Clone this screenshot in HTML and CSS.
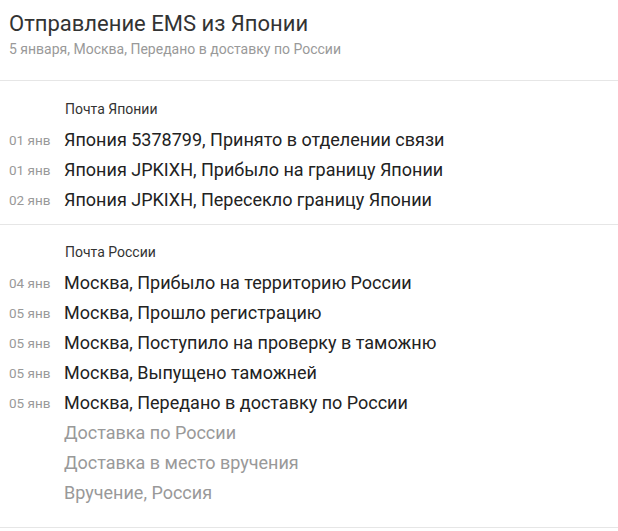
FILE: index.html
```html
<!DOCTYPE html>
<html lang="ru">
<head>
<meta charset="utf-8">
<link rel="stylesheet" href="styles.css">
</head>
<body>
<header class="head">
  <h1 class="title">Отправление EMS из Японии</h1>
  <div class="sub">5 января, Москва, Передано в доставку по России</div>
</header>
<section class="group group-jp">
  <div class="label">Почта Японии</div>
  <div class="row"><span class="date">01 янв</span><span class="text">Япония 5378799, Принято в отделении связи</span></div>
  <div class="row"><span class="date">01 янв</span><span class="text">Япония JPKIXH, Прибыло на границу Японии</span></div>
  <div class="row"><span class="date">02 янв</span><span class="text">Япония JPKIXH, Пересекло границу Японии</span></div>
</section>
<section class="group group-ru">
  <div class="label">Почта России</div>
  <div class="row"><span class="date">04 янв</span><span class="text">Москва, Прибыло на территорию России</span></div>
  <div class="row"><span class="date">05 янв</span><span class="text">Москва, Прошло регистрацию</span></div>
  <div class="row"><span class="date">05 янв</span><span class="text">Москва, Поступило на проверку в таможню</span></div>
  <div class="row"><span class="date">05 янв</span><span class="text">Москва, Выпущено таможней</span></div>
  <div class="row"><span class="date">05 янв</span><span class="text">Москва, Передано в доставку по России</span></div>
  <div class="row pending"><span class="date"></span><span class="text">Доставка по России</span></div>
  <div class="row pending"><span class="date"></span><span class="text">Доставка в место вручения</span></div>
  <div class="row pending"><span class="date"></span><span class="text">Вручение, Россия</span></div>
</section>
</body>
</html>
```
FILE: styles.css
```css
html, body {
  margin: 0;
  padding: 0;
  background: #fff;
}
body {
  font-family: Roboto, "Noto Sans", Arial, sans-serif;
  color: #333;
}
.head {
  padding: 10px 9px 0;
  height: 70px;
  border-bottom: 1px solid #e6e6e6;
}
.title {
  margin: 0;
  font-size: 22px;
  font-weight: 400;
  line-height: 28px;
  color: #333;
}
.sub {
  font-size: 14px;
  line-height: 18px;
  color: #999;
  margin-top: 2px;
}
.group {
  border-bottom: 1px solid #e6e6e6;
}
.group-jp {
  padding: 18px 0 9px;
}
.group-ru {
  padding: 17px 0 19px;
}
.label {
  padding-left: 65px;
  font-size: 14px;
  line-height: 20px;
  color: #333;
  margin-bottom: 6px;
}
.row {
  display: flex;
  align-items: center;
  height: 30px;
  line-height: 30px;
}
.date {
  width: 55px;
  padding-left: 9px;
  flex: none;
  font-size: 13.5px;
  color: #999;
}
.text {
  font-size: 18px;
  color: #222;
}
.pending .text {
  color: #999;
}
```
